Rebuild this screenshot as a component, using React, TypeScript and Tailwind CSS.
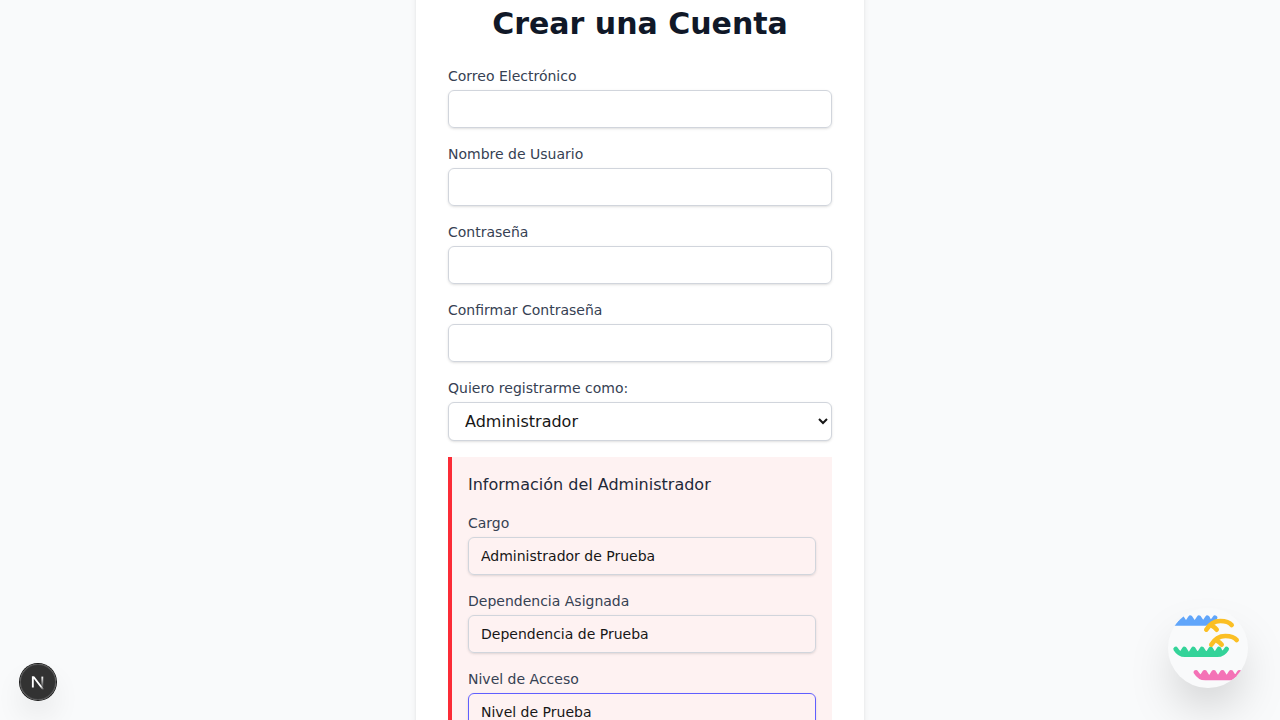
import React from "react";

type FieldProps = { label: string; id: string; type?: string; value?: string; active?: boolean };

function Field({ label, id, type = "text", value, active = false }: FieldProps) {
  return (
    <div>
      <label htmlFor={id} className="block text-sm font-medium text-gray-700">
        {label}
      </label>
      <input
        id={id}
        type={type}
        defaultValue={value}
        className={
          active
            ? "mt-1 block h-[38px] w-full rounded-md border border-indigo-500 px-3 py-2 text-sm shadow-sm outline-none"
            : "mt-1 block h-[38px] w-full rounded-md border border-gray-300 px-3 py-2 text-sm shadow-sm outline-none"
        }
      />
    </div>
  );
}

function Wave({ color, transform }: { color: string; transform?: string }) {
  return (
    <g transform={transform} fill="none" stroke={color} strokeWidth="14" strokeLinecap="round" strokeLinejoin="round">
      <path d="M77 162Q87 179 105 179H202Q220 179 230 162" />
      <path d="M94 176L103 162L112 176M121 176L130 162L139 176M147 176L156 162L165 176M173 176L182 162L191 176M198 176L207 162L213 174" />
    </g>
  );
}

function Squiggle({ transform }: { transform?: string }) {
  return (
    <g transform={transform} fill="none" stroke="#fbbf24" strokeWidth="14" strokeLinecap="round">
      <path d="M169 104Q184 78 211 78Q235 78 245 90" />
      <path d="M186 92Q195 97 200 104" />
    </g>
  );
}

function AssistantButton() {
  return (
    <button aria-label="Asistente" className="fixed right-8 bottom-8 size-20 overflow-hidden rounded-full bg-gray-50 shadow-2xl">
      <svg viewBox="54 39 240 240" className="block size-20">
        <Wave color="#60a5fa" transform="translate(-35 -94)" />
        <Wave color="#34d399" />
        <Wave color="#f472b6" transform="translate(61 70)" />
        <Squiggle />
        <Squiggle transform="translate(15 45)" />
      </svg>
    </button>
  );
}

function DevBadge() {
  return (
    <button
      aria-label="Next.js"
      className="fixed bottom-5 left-5 size-9 rounded-full bg-black/80 shadow-[0_0_0_1px_#171717,inset_0_0_0_1px_hsla(0,0%,100%,0.14),0_16px_32px_-8px_rgba(0,0,0,0.24)]"
    >
      <svg viewBox="0 0 36 36" className="block size-9" fill="none">
        <defs>
          <linearGradient id="diag" x1="9.96" y1="11.12" x2="15.48" y2="17.97" gradientUnits="userSpaceOnUse">
            <stop stopColor="white" />
            <stop offset="0.604" stopColor="white" stopOpacity="0" />
            <stop offset="1" stopColor="white" stopOpacity="0" />
          </linearGradient>
          <linearGradient id="stem" x1="11.82" y1="1.4" x2="11.79" y2="13" gradientUnits="userSpaceOnUse">
            <stop stopColor="white" />
            <stop offset="1" stopColor="white" stopOpacity="0" />
          </linearGradient>
          <clipPath id="glyph">
            <rect x="0" y="1.2" width="13.4" height="13.4" />
          </clipPath>
        </defs>
        <g transform="translate(10.5 11)" strokeWidth="1.86" clipPath="url(#glyph)">
          <path d="M13.3 15.2L2.34 1V12.6" stroke="url(#diag)" />
          <path d="M11.825 1.5V13.1" stroke="url(#stem)" />
        </g>
      </svg>
    </button>
  );
}

export default function App() {
  return (
    <div className="h-screen overflow-hidden bg-gray-50 font-['DejaVu_Sans',sans-serif] text-[#171717]">
      <main className="flex items-start justify-center">
        <div className="-mt-[26px] w-full max-w-md rounded-lg bg-white p-8 shadow-md">
          <h1 className="mb-6 text-center text-3xl font-bold text-gray-900">Crear una Cuenta</h1>
          <form className="space-y-4">
            <Field id="email" label="Correo Electrónico" type="email" />
            <Field id="username" label="Nombre de Usuario" />
            <Field id="password" label="Contraseña" type="password" />
            <Field id="confirm" label="Confirmar Contraseña" type="password" />
            <div>
              <label htmlFor="role" className="block text-sm font-medium text-gray-700">
                Quiero registrarme como:
              </label>
              <select
                id="role"
                defaultValue="admin"
                className="mt-1 block h-[39px] w-full rounded-md border border-gray-300 bg-white px-3 py-2 text-base shadow-sm"
              >
                <option value="admin">Administrador</option>
              </select>
            </div>
            <section className="space-y-4 border-l-4 border-red-500 bg-red-50 p-4">
              <h2 className="text-base font-medium text-gray-800">Información del Administrador</h2>
              <Field id="cargo" label="Cargo" value="Administrador de Prueba" />
              <Field id="dependencia" label="Dependencia Asignada" value="Dependencia de Prueba" />
              <Field id="nivel" label="Nivel de Acceso" value="Nivel de Prueba" active />
            </section>
          </form>
        </div>
      </main>
      <DevBadge />
      <AssistantButton />
    </div>
  );
}
